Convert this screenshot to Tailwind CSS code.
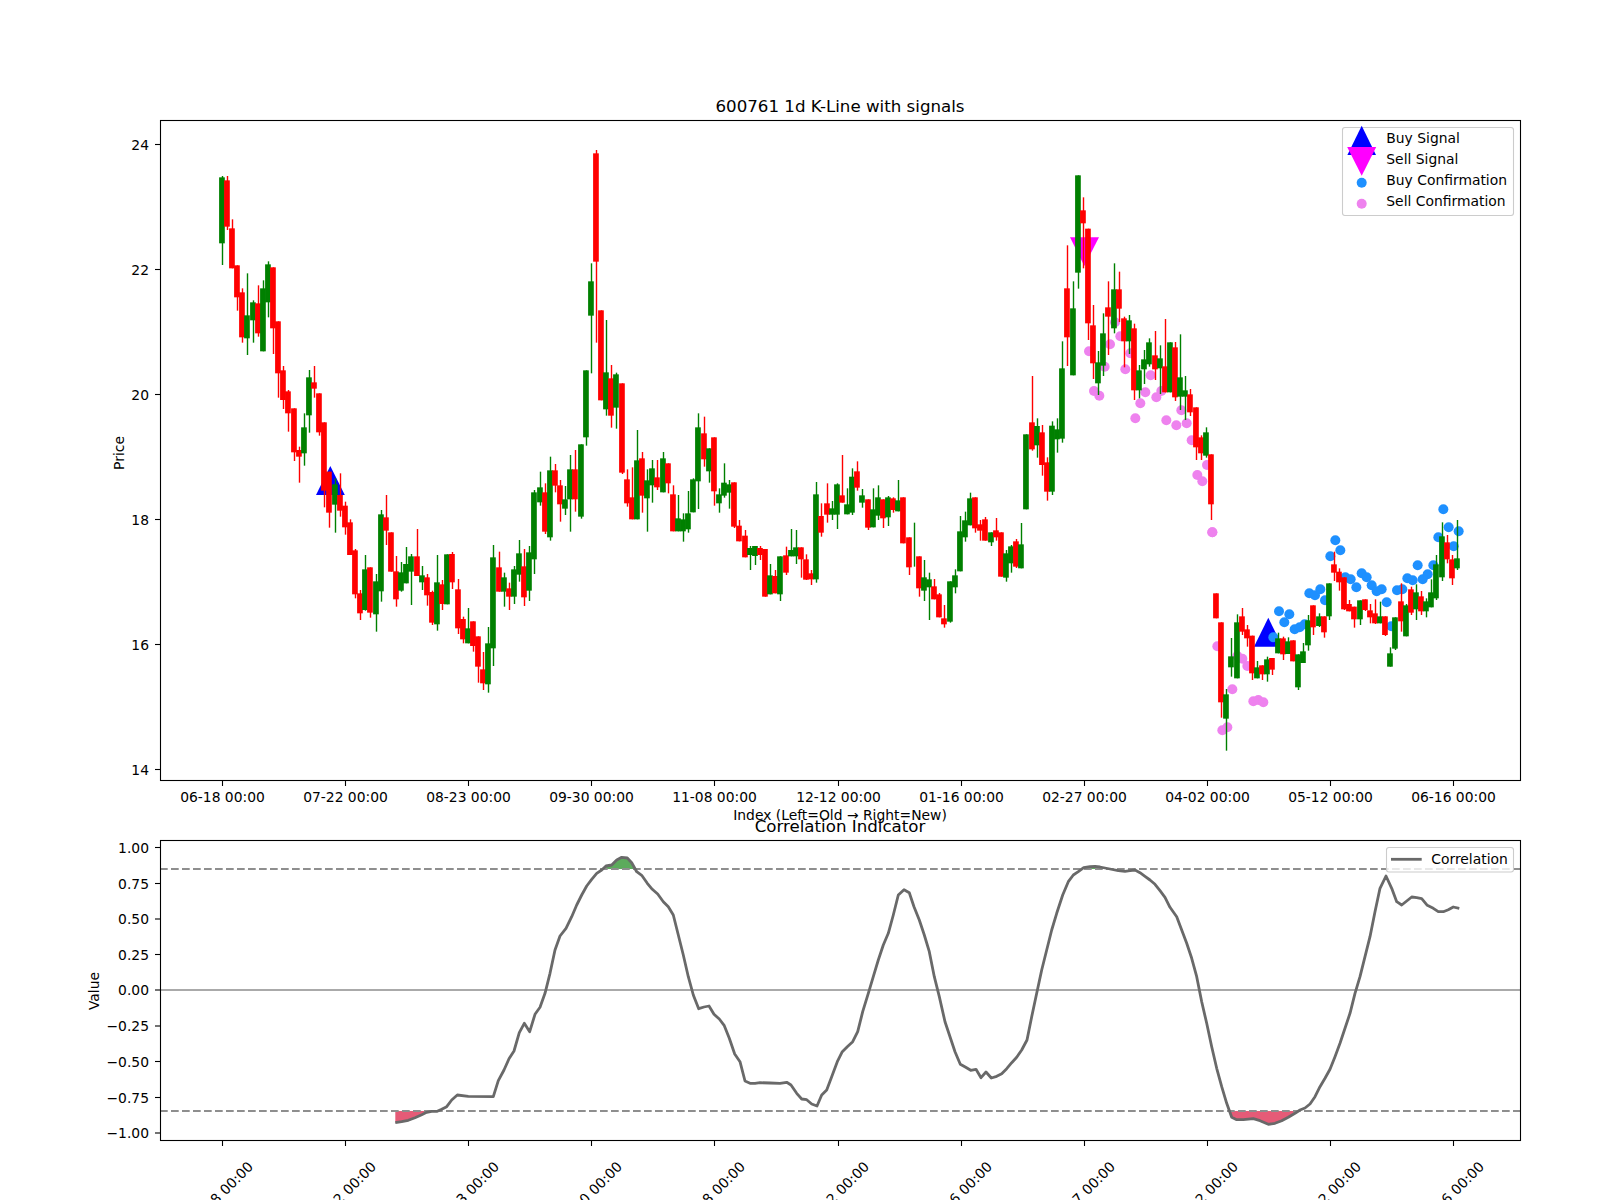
<!DOCTYPE html>
<html lang="en">
<head>
    <meta charset="UTF-8">
    <meta name="viewport" content="width=device-width, initial-scale=1.0">
    <title>600761 1d K-Line with signals</title>
    <script src="https://cdn.jsdelivr.net/npm/@tailwindcss/browser@4"></script>
</head>
<body class="bg-white overflow-hidden">
<svg id="chart" width="1600" height="1200" viewBox="0 0 1600 1200" class="block bg-white text-[13.89px] font-['DejaVu_Sans',sans-serif]">
    <g id="markers"></g>
    <g id="candles"></g>
    <g id="indicator"></g>
    <g id="axes"></g>

    <text x="840" y="111.5" text-anchor="middle" class="text-[16.67px]">600761 1d K-Line with signals</text>
    <text transform="translate(124 453) rotate(-90)" text-anchor="middle">Price</text>
    <text x="840" y="820" text-anchor="middle">Index (Left=Old → Right=New)</text>
    <text x="840" y="832" text-anchor="middle" class="text-[16.67px]">Correlation Indicator</text>
    <text transform="translate(98.5 991) rotate(-90)" text-anchor="middle">Value</text>

    <!-- top legend -->
    <rect x="1342.5" y="127.5" width="171" height="88" rx="2.5" fill="#fff" fill-opacity="0.8" stroke="#ccc" stroke-width="1.1"/>
    <polygon points="1361.7,125.7 1376,155 1347.4,155" fill="#00f"/>
    <polygon points="1347.2,147 1376.2,147 1361.7,175.8" fill="#f0f"/>
    <circle cx="1361.7" cy="182.7" r="5" fill="#1e90ff"/>
    <circle cx="1361.7" cy="203.7" r="5" fill="#ee82ee"/>
    <text x="1386.3" y="143.3">Buy Signal</text>
    <text x="1386.3" y="164.3">Sell Signal</text>
    <text x="1386.3" y="185.3">Buy Confirmation</text>
    <text x="1386.3" y="206">Sell Confirmation</text>

    <!-- bottom legend -->
    <rect x="1386.5" y="847.5" width="127" height="24.5" rx="2.5" fill="#fff" fill-opacity="0.8" stroke="#ccc" stroke-width="1.1"/>
    <line x1="1391" y1="859.3" x2="1421.7" y2="859.3" stroke="#696969" stroke-width="2.8"/>
    <text x="1431.3" y="864">Correlation</text>
</svg>

<script>
    // [colour, bodyTop, bodyBottom, wickTop, wickBottom], measured off the chart in 3x pixels from y0
    const segments = [
        [120, `g 172 370 168 435|r 181 320 168 330|r 325 445 298 445|r 436 532 436 572|r 517 652 505 668|g 586 655 460 705|g 547 601 541 668|r 550 640 496 650|g 505 694 481 694|g 433 547 424 592|r 442 625 442 702|r 604 760 604 833`],
        [400, `r -89 0 -102 27|r -26 40 -30 95|r 25 157 25 183|r 150 170 140 248|g 82 160 40 197|g -68 46 -90 98|r -53 -34 -102 -7|r -20 97 -20 107|r 67 272 67 322|r 215 338 215 383|g 253 314 235 398|r 285 332 220 350|r 317 382 305 404|r 367 465 358 465|r 451 583 447 595|r 580 640 570 660|g 508 630 465 632|r 502 638 502 653|g 544 643 522 695|g 343 574 330 605|r 352 392 285 435|r 397 515 397 515|r 514 598 468 620|g 517 572 486 575|g 492 550 441 550|g 469 515 462 615|r 469 528 387 528|g 526 547 498 570|r 532 586 522 617|r 576 668 572 675|g 547 673 465 692|r 553 612 540 630|g 463 613 463 613|r 462 547 456 567|r 568 685 537 702|r 657 718 650 730|g 685 730 624 730|r 664 738 664 755|r 709 800 709 848|r 808 850 756 870|g 730 853 681 878`],
        [540, `g 52 325 15 378|r 82 155 35 155|g 112 155 98 200|r 145 170 128 210|g 88 170 78 192|g 40 104 0 125|r 79 172 27 198|g 37 152 18 183`],
        [130, `g 1087 1288 1080 1332|g 1072 1117 1025 1127|r 1087 1205 1060 1212|g 1021 1222 980 1232|r 1021 1067 1002 1087|r 1066 1123 1050 1175|g 1108 1136 1068 1155|g 1018 1108 975 1205|r 1018 1108 960 1145|g 943 1160 943 1166|g 721 922 721 947|g 454 557 400 730|r 70 395 60 638|r 541 811 541 811|g 727 838 570 857|r 745 857 705 893|g 733 833 728 896|r 760 1028 760 1032|r 1048 1120 1018 1130|r 1102 1168 1012 1168|g 991 1168 900 1168|r 985 1097 966 1148|g 1051 1105 1018 1205|g 1015 1066 990 1118|r 1042 1072 990 1080|g 985 1087 966 1087|r 1000 1060 1000 1090|r 1093 1204 1066 1204|g 1165 1204 1095 1204|g 1168 1204 1150 1235|g 1150 1198 1083 1208|g 1048 1147 1045 1147|g 892 1054 850 1137|r 910 988 860 1010|g 955 1024 955 1058|r 922 1084 922 1127|g 1093 1120 1075 1148|g 1058 1097 1000 1103|g 1063 1088 1050 1136|r 1057 1190 1057 1194|r 1187 1234 1170 1234|r 1217 1282 1200 1282`],
        [530, `g 54 75 48 120|g 48 78 48 105|r 54 75 48 90|r 57 200 57 200`],
        [420, `g 466 523 432 523|r 468 520 450 520|g 409 523 409 543|r 406 458 380 465|g 390 409 327 409|g 382 409 330 432|r 382 418 382 473|r 418 479 403 480|r 460 478 450 495|g 223 478 186 488|r 288 338 250 350|r 250 284 190 308|g 265 284 243 300|g 193 284 190 327|r 226 248 105 248|g 253 283 205 283|g 170 278 145 285|r 154 203 124 212|g 226 248 207 263|r 238 323 238 330|g 268 322 205 322|g 232 287 196 300|r 238 295 238 324|g 232 292 228 318|r 235 270 232 278|g 241 274 180 274|r 232 370 232 370|r 352 442 352 465|g 400 400 308 440|r 409 505 409 530|g 472 512 420 543|g 478 502 458 600|r 499 538 477 538|r 523 592 519 592|r 595 613 555 623|g 484 605 484 608|g 466 502 448 520|g 334 454 288 454|g 301 352 275 365|g 235 316 218 316|r 232 325 232 338|r 313 332 300 362|r 298 362 291 362|g 337 367 337 378|r 331 352 294 362|r 337 470 337 470|g 400 473 390 485|g 379 430 375 458|r 364 440 357 444|g 373 445 309 445`],
        [160, `g 823 1048 823 1048|r 787 868 648 872|g 798 856 775 893|r 817 915 795 947|r 907 995 892 1022|g 797 995 784 1005|g 808 838 775 878|g 625 836 544 848|r 385 532 256 618|g 445 646 364 646|g 46 338 46 386|r 151 190 112 325|r 206 490 206 540|r 496 610 435 657|g 607 670 573 705|g 520 617 460 648|r 442 470 364 585|g 388 505 310 520|r 388 446 335 486|r 475 544 470 622|g 481 544 465 582|r 505 691 491 720|g 631 691 615 715|g 598 628 570 672|g 547 613 535 620|r 586 628 513 660|g 595 625 556 702|r 619 697 477 697|g 547 697 547 697|r 562 712 546 723|g 652 710 523 750|g 691 710 648 780|r 703 757 687 768|r 742 862 742 900|r 832 880 826 900|g 817 887 802 893|r 883 1033 883 1080`],
        [480, `r 340 415 340 415|r 427 667 427 713|g 643 716 627 812|g 529 562 474 590|g 427 595 403 595|r 409 455 384 465|r 448 475 435 500|r 467 580 467 600|g 562 595 543 595|r 556 583 556 600|g 538 583 530 605|r 534 569 534 585|g 475 520 458 520|r 475 523 470 540|g 484 522 472 522|r 481 544 481 544|g 523 622 523 630|g 514 549 489 549|g 421 496 405 512|r 376 442 376 465|g 409 438 400 441|r 409 457 409 473|g 310 409 310 420|r 253 278 215 303|r 275 307 265 332|r 292 388 292 390|r 372 394 360 394|r 380 418 380 443|g 361 418 361 435|r 358 390 358 393|r 391 412 372 430|r 400 430 358 432|g 409 430 365 430|r 409 465 409 468|g 520 560 502 560|g 412 506 412 510|r 364 424 310 455|g 376 469 372 469|r 328 398 320 405|g 337 388 313 420|r 349 394 333 405|g 364 394 355 412|g 337 382 298 382|g 253 355 225 360|g 169 292 127 303|r 187 238 165 250|r 238 295 225 315|g 235 265 120 270`]
    ];

    const svg = {
        candles: document.getElementById('candles'),
        markers: document.getElementById('markers'),
        indicator: document.getElementById('indicator'),
        axes: document.getElementById('axes')
    };
    const colors = { r: '#ff0000', g: '#008000' };

    let html = '';
    let idx = 0;
    segments.forEach(([y0, rows]) => {
        rows.split('|').forEach(row => {
            const p = row.split(' ');
            const c = colors[p[0]];
            const [bt, bb, wt, wb] = p.slice(1).map(v => y0 + Number(v) / 3);
            const wx = Math.floor(222.3 + 5.125 * idx) + 0.5;
            html += `<rect x="${wx - 0.7}" y="${wt}" width="1.4" height="${wb - wt}" fill="${c}"/>`;
            if (bb > bt) html += `<rect x="${wx - 3.4}" y="${bt}" width="5.7" height="${bb - bt}" fill="${c}"/>`;
            idx++;
        });
    });
    svg.candles.innerHTML = html;

    // signal triangles sit under the confirmation dots
    let marks = `
        <polygon points="330.3,466 344.8,495 316,495" fill="#00f"/>
        <polygon points="1268.3,617.7 1282.5,646.7 1254,646.7" fill="#00f"/>
        <polygon points="1070,237.3 1099,237.3 1084.3,266" fill="#f0f"/>`;
    const pink = [[1020, 160, '207,574 222,693 238,707 254,620 270,553 285,487 301,529 316,628 331,580 346,775 361,730 376,697 392,646 409,712 424,693 439,781 469,796 484,751 500,790 515,841 532,945 547,964 561,915 577,1117'],
        [1190, 480, '67,157 82,499 97,751 112,742 127,628 142,528 157,536 172,558 190,664 205,660 220,667']];
    pink.forEach(([x0, y0, pts]) => pts.split(' ').forEach(s => {
        const [x, y] = s.split(',').map(Number);
        marks += `<circle cx="${x0 + x / 3}" cy="${y0 + y / 3}" r="5" fill="#ee82ee"/>`;
    }));
    '250,472 267,394 283,427 298,403 314,448 329,442 344,433 358,340 375,346 391,328 405,361 421,229 436,181 451,211 466,292 482,298 499,322 515,280 530,292 545,316 560,334 575,328 590,367 604,439 621,331 637,328 652,295 668,301 683,256 698,298 713,283 730,256 745,172 760,88 776,142 791,199 806,154'
        .split(' ').forEach(s => {
            const [x, y] = s.split(',').map(Number);
            marks += `<circle cx="${1190 + x / 3}" cy="${480 + y / 3}" r="5" fill="#1e90ff"/>`;
        });
    svg.markers.innerHTML = marks;

    // correlation line, traced in 3x pixels from three crops
    const toPts = (x0, s) => s.split(' ').map(p => {
        const [x, y] = p.split(',').map(Number);
        return `${(x0 + x / 3).toFixed(1)},${(780 + y / 3).toFixed(1)}`;
    });
    const line = [
        ...toPts(80, '946,1028 965,1025 985,1021 1005,1013 1025,1004 1040,997 1055,994 1072,994 1085,988 1100,980 1115,960 1132,945 1165,949 1240,950 1255,902 1272,870 1287,836 1302,813 1318,758 1333,730 1349,755 1365,703 1380,682 1395,640 1410,580 1425,510 1440,468 1458,445 1475,410 1490,375 1505,345 1520,318'),
        ...toPts(590, '5,298 20,280 35,270 48,258 65,255 80,240 95,232 112,234 125,248 140,275 155,286 172,310 187,328 203,342 220,365 235,380 250,405 265,465 280,525 295,590 310,645 326,686 342,681 357,678 372,703 388,717 403,737 418,775 434,822 450,845 465,903 480,910 495,910 510,908 540,909 570,910 590,907 603,915 620,940 635,957 650,959 665,972 681,978 695,945 710,930 725,890 742,845 757,815 772,800 788,785 803,755 818,695 835,640 850,590 865,540 880,495 895,460 910,405 925,345 942,329 958,338 972,380 988,420 1003,465 1018,515 1033,590 1048,650 1065,725 1080,770 1095,815 1111,853 1127,862 1142,871 1158,868 1173,893 1188,876 1204,894 1220,889 1235,881 1250,866 1265,848 1280,832 1295,810 1311,780 1325,710 1340,640 1355,570 1370,510 1385,450 1400,400 1418,345 1435,305 1450,285 1465,275 1481,263 1500,260'),
        ...toPts(1090, '15,259 30,261 60,267 85,272 105,274 120,272 135,270 150,278 165,289 180,300 195,313 210,332 225,352 240,382 260,410 275,450 290,490 305,535 320,590 335,665 350,730 365,800 380,865 395,920 410,970 425,1012 440,1019 460,1019 490,1016 510,1022 535,1033 555,1030 575,1022 595,1012 615,1000 630,990 645,984 660,972 675,950 690,920 705,895 720,868 735,830 750,790 765,745 780,700 795,640 810,590 825,530 840,470 855,395 870,325 888,288 905,325 920,365 935,375 965,351 980,353 995,356 1012,376 1030,385 1045,395 1060,395 1075,389 1090,381 1108,385')
    ].join(' ');

    const fills = [
        ['#e55b77', toPts(80, '946,993 1040,993 1025,1004 1005,1013 985,1021 965,1025 946,1028')],
        ['#e55b77', toPts(1090, '420,993 618,993 595,1012 575,1022 555,1030 535,1033 510,1022 490,1016 460,1019 440,1019 425,1012')],
        ['#5cab5c', toPts(590, '42,267 48,258 65,255 80,240 95,232 112,234 125,248 136,267')],
        ['#5cab5c', toPts(590, '1481,267 1481,263 1500,260 1515,259 1530,261 1560,267')]
    ];
    svg.indicator.innerHTML = fills.map(([c, pts]) => `<polygon points="${pts.join(' ')}" fill="${c}"/>`).join('') + `
        <line x1="160" y1="990" x2="1520" y2="990" stroke="#aaa" stroke-width="2.1"/>
        <line x1="160" y1="869" x2="1520" y2="869" stroke="#8e8e8e" stroke-width="2.1" stroke-dasharray="7.7 3.3"/>
        <line x1="160" y1="1111" x2="1520" y2="1111" stroke="#8e8e8e" stroke-width="2.1" stroke-dasharray="7.7 3.3"/>
        <polyline points="${line}" fill="none" stroke="#696969" stroke-width="2.8" stroke-linejoin="round"/>`;

    // frames, ticks and tick labels
    const tickX = [222.5, 345.5, 468.5, 591.5, 714.5, 838.5, 961.5, 1084.5, 1207.5, 1330.5, 1453.5];
    const dates = ['06-18', '07-22', '08-23', '09-30', '11-08', '12-12', '01-16', '02-27', '04-02', '05-12', '06-16'];
    let axes = `
        <rect x="160.5" y="120.5" width="1360" height="660" fill="none" stroke="#000" stroke-width="1.1"/>
        <rect x="160.5" y="840.5" width="1360" height="300" fill="none" stroke="#000" stroke-width="1.1"/>`;
    tickX.forEach((x, i) => {
        axes += `<line x1="${x}" y1="781" x2="${x}" y2="786" stroke="#000" stroke-width="1.1"/>
            <line x1="${x}" y1="1141" x2="${x}" y2="1146" stroke="#000" stroke-width="1.1"/>
            <text x="${x}" y="801.5" text-anchor="middle">${dates[i]} 00:00</text>
            <text transform="translate(${x - 2} 1194) rotate(-45)" text-anchor="middle" y="5">${dates[i]} 00:00</text>`;
    });
    [['24', 144.5], ['22', 269.5], ['20', 394.5], ['18', 519.5], ['16', 644.5], ['14', 769.5],
     ['1.00', 847.5], ['0.75', 883.5], ['0.50', 919], ['0.25', 954.5], ['0.00', 990],
     ['−0.25', 1026], ['−0.50', 1061.5], ['−0.75', 1097.5], ['−1.00', 1133]].forEach(([t, y]) => {
        axes += `<line x1="155" y1="${y}" x2="160" y2="${y}" stroke="#000" stroke-width="1.1"/>
            <text x="149" y="${y + 5}" text-anchor="end">${t}</text>`;
    });
    svg.axes.innerHTML = axes;
</script>
</body>
</html>
